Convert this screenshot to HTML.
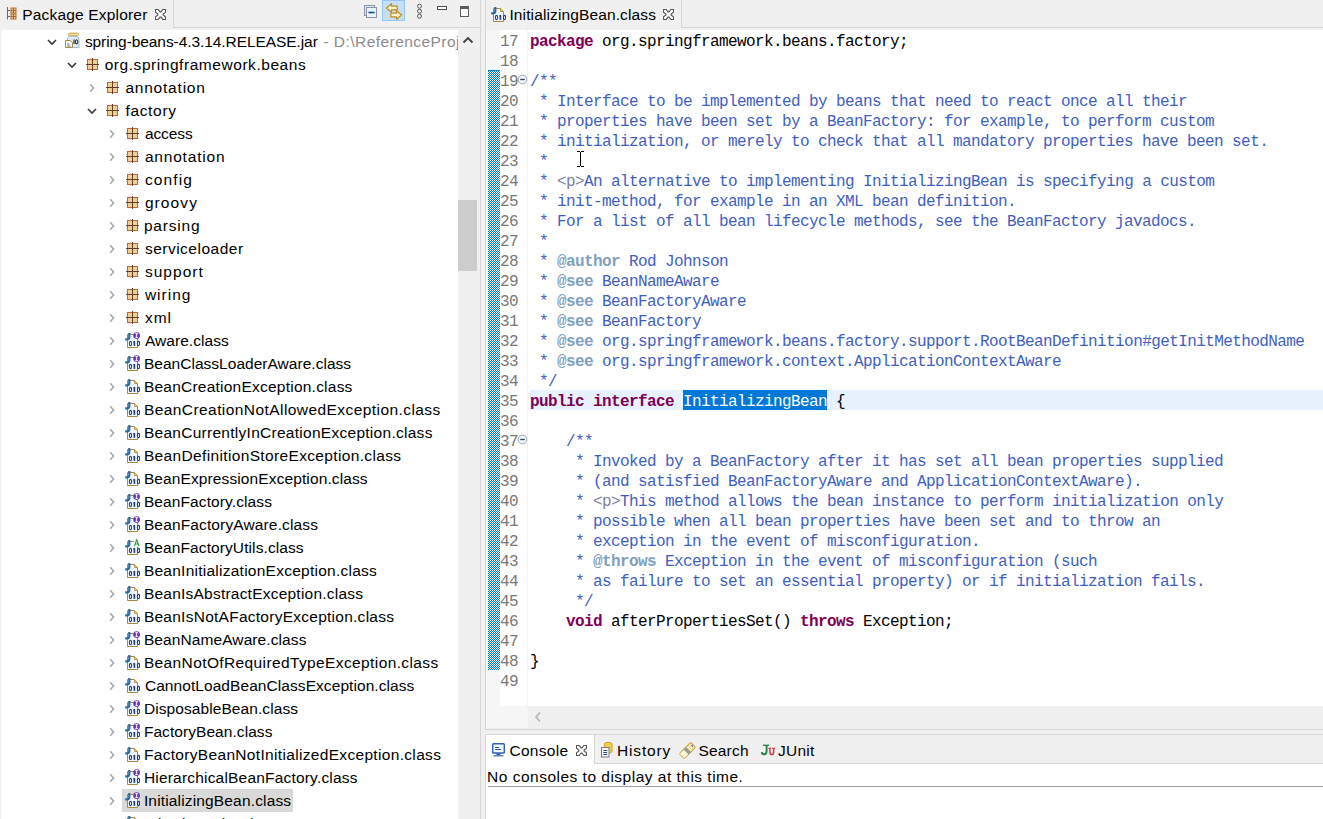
<!DOCTYPE html><html><head><meta charset="utf-8"><title>Eclipse</title><style>
*{margin:0;padding:0;box-sizing:content-box}
html,body{width:1323px;height:819px;overflow:hidden;background:#f0f0f0}
body{position:relative;font-family:"Liberation Sans",sans-serif;font-size:16px;color:#000}
.a{position:absolute;display:block}
.t{position:absolute;white-space:pre;line-height:23px;color:#000;font-size:15.5px}
.ln{position:absolute;left:500px;width:18px;text-align:right;font-family:"Liberation Mono",monospace;font-size:16px;letter-spacing:-0.6px;line-height:20px;color:#787878;white-space:pre}
.cd{position:absolute;left:530px;font-family:"Liberation Mono",monospace;font-size:16px;letter-spacing:-0.6px;line-height:20px;white-space:pre;color:#000}
.kw{color:#7f0055;font-weight:bold}
.jd{color:#3f5fbf}
.jt{color:#7f9fbf;font-weight:bold}
.tg{color:#7f7f9f}
.sel{color:#fff}
.dith{background-color:#fff;background-image:linear-gradient(45deg,#0078d7 25%,transparent 25%,transparent 75%,#0078d7 75%),linear-gradient(45deg,#0078d7 25%,transparent 25%,transparent 75%,#0078d7 75%);background-size:2px 2px;background-position:0 0,1px 1px}
</style></head><body><div class="a" style="left:173px;top:0;width:1px;height:28px;background:#d6d6d6"></div>
<div class="a" style="left:173px;top:27px;width:307px;height:1px;background:#d6d6d6"></div>
<div class="a" style="left:480px;top:0;width:1px;height:819px;background:#d6d6d6"></div>
<svg class="a" style="left:6px;top:6px" width="12" height="15" viewBox="0 0 12 15"><path d="M1.5 1V13.5M1.5 4.5H4.5M1.5 10.5H4.5" stroke="#5f6b80" stroke-width="1"/><rect x="5" y="2" width="5" height="5" fill="#f0c890" stroke="#b8692e" stroke-width="1"/><rect x="5" y="8" width="5" height="5" fill="#f0c890" stroke="#b8692e" stroke-width="1"/><path d="M7.5 2V7M5 4.5H10M7.5 8V13M5 10.5H10" stroke="#a8582a" stroke-width="0.9"/></svg>
<div class="t" style="left:22.20px;top:1px;letter-spacing:0.187px;line-height:28px;">Package Explorer</div>
<svg class="a" style="left:154.5px;top:8.5px" width="11" height="11" viewBox="0 0 11 11"><path d="M0.5 0.5H3.1L5 2.9H6L7.9 0.5H10.5V3.1L8.1 5V6L10.5 7.9V10.5H7.9L6 8.1H5L3.1 10.5H0.5V7.9L2.9 6V5L0.5 3.1Z" fill="#fff" stroke="#555" stroke-width="1.1" stroke-linejoin="miter"/></svg>
<svg class="a" style="left:363px;top:4px" width="15" height="15" viewBox="0 0 15 15"><rect x="1.5" y="1.5" width="10" height="10" fill="#d4ecec" stroke="#8c94ac"/><rect x="3.5" y="3.5" width="10" height="10" fill="#e6f6f6" stroke="#8c94ac"/><path d="M5.5 8.5H11.5" stroke="#0b4a84" stroke-width="1.6"/></svg>
<div class="a" style="left:382px;top:0;width:21px;height:19px;background:#c4dff6;border:1px solid #90c7f4"></div>
<svg class="a" style="left:384px;top:2px" width="20" height="19" viewBox="0 0 20 19"><path d="M2.5 6L7.5 1.8V4.2H13.2V7.8H7.5V10.2Z" fill="#fff6d0" stroke="#c48a18" stroke-width="1.2" stroke-linejoin="round"/><path d="M17.5 13L12.5 8.8V11.2H6.8V14.8H12.5V17.2Z" fill="#fff6d0" stroke="#c48a18" stroke-width="1.2" stroke-linejoin="round"/></svg>
<svg class="a" style="left:414px;top:3px" width="11" height="17" viewBox="0 0 11 17"><g fill="none" stroke="#555" stroke-width="1"><circle cx="5.5" cy="3.2" r="2"/><circle cx="5.5" cy="8.2" r="2"/><circle cx="5.5" cy="13.2" r="2"/></g></svg>
<div class="a" style="left:437px;top:6px;width:8px;height:2px;border:1px solid #505050;background:#fff"></div>
<div class="a" style="left:460px;top:6px;width:7px;height:7px;border:1.5px solid #5a5a5a;background:#fff;border-top-width:3.5px"></div>
<div class="a" style="left:1px;top:30px;width:457px;height:789px;background:#fff"></div>
<div class="a" style="left:458px;top:30px;width:22px;height:789px;background:#f0f0f0"></div>
<div class="a" style="left:458px;top:200px;width:19px;height:71px;background:#cdcdcd"></div>
<svg class="a" style="left:462px;top:36px" width="12" height="8" viewBox="0 0 12 8"><path d="M1.5 6.5L6 2L10.5 6.5" fill="none" stroke="#404040" stroke-width="1.8"/></svg>
<svg class="a" style="left:46.5px;top:37.5px" width="10" height="8" viewBox="0 0 10 8"><path d="M1 2L5 6L9 2" fill="none" stroke="#3c3c3c" stroke-width="1.7"/></svg>
<svg class="a" style="left:64px;top:32px" width="18" height="18" viewBox="0 0 18 18"><rect x="4.5" y="1.2" width="10" height="2.6" rx="1.3" fill="#f3e6a6" stroke="#c9a22e" stroke-width="1"/><path d="M5.5 4.3Q3.2 5.5 3.2 8.5V15.6H15V8.5Q15 5.5 13 4.3Z" fill="#e2eaf5" stroke="#a4b6d0" stroke-width="1"/><path d="M10 7.6V12" stroke="#333" stroke-width="1.2"/><ellipse cx="12.6" cy="9.8" rx="1.2" ry="2.1" fill="none" stroke="#333" stroke-width="1.1"/><path d="M1.5 8.5H6.3L8.5 10.7V15.5H1.5Z" fill="#f6f8fc" stroke="#a88a3c" stroke-width="1"/><path d="M3 12H5.5M3 14H6.5" stroke="#4a6aa8" stroke-width="0.9"/></svg>
<svg class="a" style="left:66.5px;top:60.5px" width="10" height="8" viewBox="0 0 10 8"><path d="M1 2L5 6L9 2" fill="none" stroke="#3c3c3c" stroke-width="1.7"/></svg>
<svg class="a" style="left:84px;top:56px" width="16" height="16" viewBox="0 0 16 16"><rect x="3.5" y="3.5" width="10" height="10" fill="#ecd098" stroke="#b86a3a" stroke-width="1"/><path d="M8.5 2V15M2 8.5H15" stroke="#6a3a28" stroke-width="1"/></svg>
<svg class="a" style="left:88px;top:82.5px" width="8" height="10" viewBox="0 0 8 10"><path d="M2.2 1.2L5.6 5L2.2 8.8" fill="none" stroke="#a6a6a6" stroke-width="1.5"/></svg>
<svg class="a" style="left:104px;top:79px" width="16" height="16" viewBox="0 0 16 16"><rect x="3.5" y="3.5" width="10" height="10" fill="#ecd098" stroke="#b86a3a" stroke-width="1"/><path d="M8.5 2V15M2 8.5H15" stroke="#6a3a28" stroke-width="1"/></svg>
<svg class="a" style="left:86.5px;top:106.5px" width="10" height="8" viewBox="0 0 10 8"><path d="M1 2L5 6L9 2" fill="none" stroke="#3c3c3c" stroke-width="1.7"/></svg>
<svg class="a" style="left:104px;top:102px" width="16" height="16" viewBox="0 0 16 16"><rect x="3.5" y="3.5" width="10" height="10" fill="#ecd098" stroke="#b86a3a" stroke-width="1"/><path d="M8.5 2V15M2 8.5H15" stroke="#6a3a28" stroke-width="1"/></svg>
<svg class="a" style="left:108px;top:128.5px" width="8" height="10" viewBox="0 0 8 10"><path d="M2.2 1.2L5.6 5L2.2 8.8" fill="none" stroke="#a6a6a6" stroke-width="1.5"/></svg>
<svg class="a" style="left:124px;top:125px" width="16" height="16" viewBox="0 0 16 16"><rect x="3.5" y="3.5" width="10" height="10" fill="#ecd098" stroke="#b86a3a" stroke-width="1"/><path d="M8.5 2V15M2 8.5H15" stroke="#6a3a28" stroke-width="1"/></svg>
<svg class="a" style="left:108px;top:151.5px" width="8" height="10" viewBox="0 0 8 10"><path d="M2.2 1.2L5.6 5L2.2 8.8" fill="none" stroke="#a6a6a6" stroke-width="1.5"/></svg>
<svg class="a" style="left:124px;top:148px" width="16" height="16" viewBox="0 0 16 16"><rect x="3.5" y="3.5" width="10" height="10" fill="#ecd098" stroke="#b86a3a" stroke-width="1"/><path d="M8.5 2V15M2 8.5H15" stroke="#6a3a28" stroke-width="1"/></svg>
<svg class="a" style="left:108px;top:174.5px" width="8" height="10" viewBox="0 0 8 10"><path d="M2.2 1.2L5.6 5L2.2 8.8" fill="none" stroke="#a6a6a6" stroke-width="1.5"/></svg>
<svg class="a" style="left:124px;top:171px" width="16" height="16" viewBox="0 0 16 16"><rect x="3.5" y="3.5" width="10" height="10" fill="#ecd098" stroke="#b86a3a" stroke-width="1"/><path d="M8.5 2V15M2 8.5H15" stroke="#6a3a28" stroke-width="1"/></svg>
<svg class="a" style="left:108px;top:197.5px" width="8" height="10" viewBox="0 0 8 10"><path d="M2.2 1.2L5.6 5L2.2 8.8" fill="none" stroke="#a6a6a6" stroke-width="1.5"/></svg>
<svg class="a" style="left:124px;top:194px" width="16" height="16" viewBox="0 0 16 16"><rect x="3.5" y="3.5" width="10" height="10" fill="#ecd098" stroke="#b86a3a" stroke-width="1"/><path d="M8.5 2V15M2 8.5H15" stroke="#6a3a28" stroke-width="1"/></svg>
<svg class="a" style="left:108px;top:220.5px" width="8" height="10" viewBox="0 0 8 10"><path d="M2.2 1.2L5.6 5L2.2 8.8" fill="none" stroke="#a6a6a6" stroke-width="1.5"/></svg>
<svg class="a" style="left:124px;top:217px" width="16" height="16" viewBox="0 0 16 16"><rect x="3.5" y="3.5" width="10" height="10" fill="#ecd098" stroke="#b86a3a" stroke-width="1"/><path d="M8.5 2V15M2 8.5H15" stroke="#6a3a28" stroke-width="1"/></svg>
<svg class="a" style="left:108px;top:243.5px" width="8" height="10" viewBox="0 0 8 10"><path d="M2.2 1.2L5.6 5L2.2 8.8" fill="none" stroke="#a6a6a6" stroke-width="1.5"/></svg>
<svg class="a" style="left:124px;top:240px" width="16" height="16" viewBox="0 0 16 16"><rect x="3.5" y="3.5" width="10" height="10" fill="#ecd098" stroke="#b86a3a" stroke-width="1"/><path d="M8.5 2V15M2 8.5H15" stroke="#6a3a28" stroke-width="1"/></svg>
<svg class="a" style="left:108px;top:266.5px" width="8" height="10" viewBox="0 0 8 10"><path d="M2.2 1.2L5.6 5L2.2 8.8" fill="none" stroke="#a6a6a6" stroke-width="1.5"/></svg>
<svg class="a" style="left:124px;top:263px" width="16" height="16" viewBox="0 0 16 16"><rect x="3.5" y="3.5" width="10" height="10" fill="#ecd098" stroke="#b86a3a" stroke-width="1"/><path d="M8.5 2V15M2 8.5H15" stroke="#6a3a28" stroke-width="1"/></svg>
<svg class="a" style="left:108px;top:289.5px" width="8" height="10" viewBox="0 0 8 10"><path d="M2.2 1.2L5.6 5L2.2 8.8" fill="none" stroke="#a6a6a6" stroke-width="1.5"/></svg>
<svg class="a" style="left:124px;top:286px" width="16" height="16" viewBox="0 0 16 16"><rect x="3.5" y="3.5" width="10" height="10" fill="#ecd098" stroke="#b86a3a" stroke-width="1"/><path d="M8.5 2V15M2 8.5H15" stroke="#6a3a28" stroke-width="1"/></svg>
<svg class="a" style="left:108px;top:312.5px" width="8" height="10" viewBox="0 0 8 10"><path d="M2.2 1.2L5.6 5L2.2 8.8" fill="none" stroke="#a6a6a6" stroke-width="1.5"/></svg>
<svg class="a" style="left:124px;top:309px" width="16" height="16" viewBox="0 0 16 16"><rect x="3.5" y="3.5" width="10" height="10" fill="#ecd098" stroke="#b86a3a" stroke-width="1"/><path d="M8.5 2V15M2 8.5H15" stroke="#6a3a28" stroke-width="1"/></svg>
<svg class="a" style="left:108px;top:335.5px" width="8" height="10" viewBox="0 0 8 10"><path d="M2.2 1.2L5.6 5L2.2 8.8" fill="none" stroke="#a6a6a6" stroke-width="1.5"/></svg>
<svg class="a" style="left:124px;top:332px" width="16" height="16" viewBox="0 0 16 16"><path d="M3.5 2.5H13.5V15.5H3.5Z" fill="#f4f7fc" stroke="#a88a3c" stroke-width="1"/><circle cx="12.6" cy="3.6" r="3.4" fill="#6e3fb0"/><path d="M11.3 1.6H13.9M11.3 5.6H13.9M12.6 1.6V5.6" stroke="#fff" stroke-width="0.9"/><path d="M5.3 1V5.3Q5.3 7.3 3 7.3H1.2" fill="none" stroke="#2c6aa6" stroke-width="2.2"/><g fill="none" stroke="#1b3f78" stroke-width="1.1"><ellipse cx="6.5" cy="11.5" rx="1.15" ry="2.1"/><ellipse cx="14.5" cy="11.5" rx="1.15" ry="2.1"/></g><path d="M10.4 9.2V13.9" stroke="#1b3f78" stroke-width="1.6"/><path d="M9.4 10.2L10.6 9.3" stroke="#1b3f78" stroke-width="1.1"/></svg>
<svg class="a" style="left:108px;top:358.5px" width="8" height="10" viewBox="0 0 8 10"><path d="M2.2 1.2L5.6 5L2.2 8.8" fill="none" stroke="#a6a6a6" stroke-width="1.5"/></svg>
<svg class="a" style="left:124px;top:355px" width="16" height="16" viewBox="0 0 16 16"><path d="M3.5 2.5H13.5V15.5H3.5Z" fill="#f4f7fc" stroke="#a88a3c" stroke-width="1"/><circle cx="12.6" cy="3.6" r="3.4" fill="#6e3fb0"/><path d="M11.3 1.6H13.9M11.3 5.6H13.9M12.6 1.6V5.6" stroke="#fff" stroke-width="0.9"/><path d="M5.3 1V5.3Q5.3 7.3 3 7.3H1.2" fill="none" stroke="#2c6aa6" stroke-width="2.2"/><g fill="none" stroke="#1b3f78" stroke-width="1.1"><ellipse cx="6.5" cy="11.5" rx="1.15" ry="2.1"/><ellipse cx="14.5" cy="11.5" rx="1.15" ry="2.1"/></g><path d="M10.4 9.2V13.9" stroke="#1b3f78" stroke-width="1.6"/><path d="M9.4 10.2L10.6 9.3" stroke="#1b3f78" stroke-width="1.1"/></svg>
<svg class="a" style="left:108px;top:381.5px" width="8" height="10" viewBox="0 0 8 10"><path d="M2.2 1.2L5.6 5L2.2 8.8" fill="none" stroke="#a6a6a6" stroke-width="1.5"/></svg>
<svg class="a" style="left:124px;top:378px" width="16" height="16" viewBox="0 0 16 16"><path d="M3.5 2.5H10.5L13.5 5.5V15.5H3.5Z" fill="#f4f7fc" stroke="#a88a3c" stroke-width="1"/><path d="M10.5 2.5V5.5H13.5" fill="#e8cf8a" stroke="#b8943c" stroke-width="1"/><path d="M5.3 1V5.3Q5.3 7.3 3 7.3H1.2" fill="none" stroke="#2c6aa6" stroke-width="2.2"/><g fill="none" stroke="#1b3f78" stroke-width="1.1"><ellipse cx="6.5" cy="11.5" rx="1.15" ry="2.1"/><ellipse cx="14.5" cy="11.5" rx="1.15" ry="2.1"/></g><path d="M10.4 9.2V13.9" stroke="#1b3f78" stroke-width="1.6"/><path d="M9.4 10.2L10.6 9.3" stroke="#1b3f78" stroke-width="1.1"/></svg>
<svg class="a" style="left:108px;top:404.5px" width="8" height="10" viewBox="0 0 8 10"><path d="M2.2 1.2L5.6 5L2.2 8.8" fill="none" stroke="#a6a6a6" stroke-width="1.5"/></svg>
<svg class="a" style="left:124px;top:401px" width="16" height="16" viewBox="0 0 16 16"><path d="M3.5 2.5H10.5L13.5 5.5V15.5H3.5Z" fill="#f4f7fc" stroke="#a88a3c" stroke-width="1"/><path d="M10.5 2.5V5.5H13.5" fill="#e8cf8a" stroke="#b8943c" stroke-width="1"/><path d="M5.3 1V5.3Q5.3 7.3 3 7.3H1.2" fill="none" stroke="#2c6aa6" stroke-width="2.2"/><g fill="none" stroke="#1b3f78" stroke-width="1.1"><ellipse cx="6.5" cy="11.5" rx="1.15" ry="2.1"/><ellipse cx="14.5" cy="11.5" rx="1.15" ry="2.1"/></g><path d="M10.4 9.2V13.9" stroke="#1b3f78" stroke-width="1.6"/><path d="M9.4 10.2L10.6 9.3" stroke="#1b3f78" stroke-width="1.1"/></svg>
<svg class="a" style="left:108px;top:427.5px" width="8" height="10" viewBox="0 0 8 10"><path d="M2.2 1.2L5.6 5L2.2 8.8" fill="none" stroke="#a6a6a6" stroke-width="1.5"/></svg>
<svg class="a" style="left:124px;top:424px" width="16" height="16" viewBox="0 0 16 16"><path d="M3.5 2.5H10.5L13.5 5.5V15.5H3.5Z" fill="#f4f7fc" stroke="#a88a3c" stroke-width="1"/><path d="M10.5 2.5V5.5H13.5" fill="#e8cf8a" stroke="#b8943c" stroke-width="1"/><path d="M5.3 1V5.3Q5.3 7.3 3 7.3H1.2" fill="none" stroke="#2c6aa6" stroke-width="2.2"/><g fill="none" stroke="#1b3f78" stroke-width="1.1"><ellipse cx="6.5" cy="11.5" rx="1.15" ry="2.1"/><ellipse cx="14.5" cy="11.5" rx="1.15" ry="2.1"/></g><path d="M10.4 9.2V13.9" stroke="#1b3f78" stroke-width="1.6"/><path d="M9.4 10.2L10.6 9.3" stroke="#1b3f78" stroke-width="1.1"/></svg>
<svg class="a" style="left:108px;top:450.5px" width="8" height="10" viewBox="0 0 8 10"><path d="M2.2 1.2L5.6 5L2.2 8.8" fill="none" stroke="#a6a6a6" stroke-width="1.5"/></svg>
<svg class="a" style="left:124px;top:447px" width="16" height="16" viewBox="0 0 16 16"><path d="M3.5 2.5H10.5L13.5 5.5V15.5H3.5Z" fill="#f4f7fc" stroke="#a88a3c" stroke-width="1"/><path d="M10.5 2.5V5.5H13.5" fill="#e8cf8a" stroke="#b8943c" stroke-width="1"/><path d="M5.3 1V5.3Q5.3 7.3 3 7.3H1.2" fill="none" stroke="#2c6aa6" stroke-width="2.2"/><g fill="none" stroke="#1b3f78" stroke-width="1.1"><ellipse cx="6.5" cy="11.5" rx="1.15" ry="2.1"/><ellipse cx="14.5" cy="11.5" rx="1.15" ry="2.1"/></g><path d="M10.4 9.2V13.9" stroke="#1b3f78" stroke-width="1.6"/><path d="M9.4 10.2L10.6 9.3" stroke="#1b3f78" stroke-width="1.1"/></svg>
<svg class="a" style="left:108px;top:473.5px" width="8" height="10" viewBox="0 0 8 10"><path d="M2.2 1.2L5.6 5L2.2 8.8" fill="none" stroke="#a6a6a6" stroke-width="1.5"/></svg>
<svg class="a" style="left:124px;top:470px" width="16" height="16" viewBox="0 0 16 16"><path d="M3.5 2.5H10.5L13.5 5.5V15.5H3.5Z" fill="#f4f7fc" stroke="#a88a3c" stroke-width="1"/><path d="M10.5 2.5V5.5H13.5" fill="#e8cf8a" stroke="#b8943c" stroke-width="1"/><path d="M5.3 1V5.3Q5.3 7.3 3 7.3H1.2" fill="none" stroke="#2c6aa6" stroke-width="2.2"/><g fill="none" stroke="#1b3f78" stroke-width="1.1"><ellipse cx="6.5" cy="11.5" rx="1.15" ry="2.1"/><ellipse cx="14.5" cy="11.5" rx="1.15" ry="2.1"/></g><path d="M10.4 9.2V13.9" stroke="#1b3f78" stroke-width="1.6"/><path d="M9.4 10.2L10.6 9.3" stroke="#1b3f78" stroke-width="1.1"/></svg>
<svg class="a" style="left:108px;top:496.5px" width="8" height="10" viewBox="0 0 8 10"><path d="M2.2 1.2L5.6 5L2.2 8.8" fill="none" stroke="#a6a6a6" stroke-width="1.5"/></svg>
<svg class="a" style="left:124px;top:493px" width="16" height="16" viewBox="0 0 16 16"><path d="M3.5 2.5H13.5V15.5H3.5Z" fill="#f4f7fc" stroke="#a88a3c" stroke-width="1"/><circle cx="12.6" cy="3.6" r="3.4" fill="#6e3fb0"/><path d="M11.3 1.6H13.9M11.3 5.6H13.9M12.6 1.6V5.6" stroke="#fff" stroke-width="0.9"/><path d="M5.3 1V5.3Q5.3 7.3 3 7.3H1.2" fill="none" stroke="#2c6aa6" stroke-width="2.2"/><g fill="none" stroke="#1b3f78" stroke-width="1.1"><ellipse cx="6.5" cy="11.5" rx="1.15" ry="2.1"/><ellipse cx="14.5" cy="11.5" rx="1.15" ry="2.1"/></g><path d="M10.4 9.2V13.9" stroke="#1b3f78" stroke-width="1.6"/><path d="M9.4 10.2L10.6 9.3" stroke="#1b3f78" stroke-width="1.1"/></svg>
<svg class="a" style="left:108px;top:519.5px" width="8" height="10" viewBox="0 0 8 10"><path d="M2.2 1.2L5.6 5L2.2 8.8" fill="none" stroke="#a6a6a6" stroke-width="1.5"/></svg>
<svg class="a" style="left:124px;top:516px" width="16" height="16" viewBox="0 0 16 16"><path d="M3.5 2.5H13.5V15.5H3.5Z" fill="#f4f7fc" stroke="#a88a3c" stroke-width="1"/><circle cx="12.6" cy="3.6" r="3.4" fill="#6e3fb0"/><path d="M11.3 1.6H13.9M11.3 5.6H13.9M12.6 1.6V5.6" stroke="#fff" stroke-width="0.9"/><path d="M5.3 1V5.3Q5.3 7.3 3 7.3H1.2" fill="none" stroke="#2c6aa6" stroke-width="2.2"/><g fill="none" stroke="#1b3f78" stroke-width="1.1"><ellipse cx="6.5" cy="11.5" rx="1.15" ry="2.1"/><ellipse cx="14.5" cy="11.5" rx="1.15" ry="2.1"/></g><path d="M10.4 9.2V13.9" stroke="#1b3f78" stroke-width="1.6"/><path d="M9.4 10.2L10.6 9.3" stroke="#1b3f78" stroke-width="1.1"/></svg>
<svg class="a" style="left:108px;top:542.5px" width="8" height="10" viewBox="0 0 8 10"><path d="M2.2 1.2L5.6 5L2.2 8.8" fill="none" stroke="#a6a6a6" stroke-width="1.5"/></svg>
<svg class="a" style="left:124px;top:539px" width="16" height="16" viewBox="0 0 16 16"><path d="M3.5 2.5H13.5V15.5H3.5Z" fill="#f4f7fc" stroke="#a88a3c" stroke-width="1"/><rect x="10" y="0" width="6" height="7.5" fill="#fff"/><path d="M10.5 7L12.7 0.6L14.9 7M11.3 5H14.1" fill="none" stroke="#2a9a48" stroke-width="1.1"/><path d="M5.3 1V5.3Q5.3 7.3 3 7.3H1.2" fill="none" stroke="#2c6aa6" stroke-width="2.2"/><g fill="none" stroke="#1b3f78" stroke-width="1.1"><ellipse cx="6.5" cy="11.5" rx="1.15" ry="2.1"/><ellipse cx="14.5" cy="11.5" rx="1.15" ry="2.1"/></g><path d="M10.4 9.2V13.9" stroke="#1b3f78" stroke-width="1.6"/><path d="M9.4 10.2L10.6 9.3" stroke="#1b3f78" stroke-width="1.1"/></svg>
<svg class="a" style="left:108px;top:565.5px" width="8" height="10" viewBox="0 0 8 10"><path d="M2.2 1.2L5.6 5L2.2 8.8" fill="none" stroke="#a6a6a6" stroke-width="1.5"/></svg>
<svg class="a" style="left:124px;top:562px" width="16" height="16" viewBox="0 0 16 16"><path d="M3.5 2.5H10.5L13.5 5.5V15.5H3.5Z" fill="#f4f7fc" stroke="#a88a3c" stroke-width="1"/><path d="M10.5 2.5V5.5H13.5" fill="#e8cf8a" stroke="#b8943c" stroke-width="1"/><path d="M5.3 1V5.3Q5.3 7.3 3 7.3H1.2" fill="none" stroke="#2c6aa6" stroke-width="2.2"/><g fill="none" stroke="#1b3f78" stroke-width="1.1"><ellipse cx="6.5" cy="11.5" rx="1.15" ry="2.1"/><ellipse cx="14.5" cy="11.5" rx="1.15" ry="2.1"/></g><path d="M10.4 9.2V13.9" stroke="#1b3f78" stroke-width="1.6"/><path d="M9.4 10.2L10.6 9.3" stroke="#1b3f78" stroke-width="1.1"/></svg>
<svg class="a" style="left:108px;top:588.5px" width="8" height="10" viewBox="0 0 8 10"><path d="M2.2 1.2L5.6 5L2.2 8.8" fill="none" stroke="#a6a6a6" stroke-width="1.5"/></svg>
<svg class="a" style="left:124px;top:585px" width="16" height="16" viewBox="0 0 16 16"><path d="M3.5 2.5H10.5L13.5 5.5V15.5H3.5Z" fill="#f4f7fc" stroke="#a88a3c" stroke-width="1"/><path d="M10.5 2.5V5.5H13.5" fill="#e8cf8a" stroke="#b8943c" stroke-width="1"/><path d="M5.3 1V5.3Q5.3 7.3 3 7.3H1.2" fill="none" stroke="#2c6aa6" stroke-width="2.2"/><g fill="none" stroke="#1b3f78" stroke-width="1.1"><ellipse cx="6.5" cy="11.5" rx="1.15" ry="2.1"/><ellipse cx="14.5" cy="11.5" rx="1.15" ry="2.1"/></g><path d="M10.4 9.2V13.9" stroke="#1b3f78" stroke-width="1.6"/><path d="M9.4 10.2L10.6 9.3" stroke="#1b3f78" stroke-width="1.1"/></svg>
<svg class="a" style="left:108px;top:611.5px" width="8" height="10" viewBox="0 0 8 10"><path d="M2.2 1.2L5.6 5L2.2 8.8" fill="none" stroke="#a6a6a6" stroke-width="1.5"/></svg>
<svg class="a" style="left:124px;top:608px" width="16" height="16" viewBox="0 0 16 16"><path d="M3.5 2.5H10.5L13.5 5.5V15.5H3.5Z" fill="#f4f7fc" stroke="#a88a3c" stroke-width="1"/><path d="M10.5 2.5V5.5H13.5" fill="#e8cf8a" stroke="#b8943c" stroke-width="1"/><path d="M5.3 1V5.3Q5.3 7.3 3 7.3H1.2" fill="none" stroke="#2c6aa6" stroke-width="2.2"/><g fill="none" stroke="#1b3f78" stroke-width="1.1"><ellipse cx="6.5" cy="11.5" rx="1.15" ry="2.1"/><ellipse cx="14.5" cy="11.5" rx="1.15" ry="2.1"/></g><path d="M10.4 9.2V13.9" stroke="#1b3f78" stroke-width="1.6"/><path d="M9.4 10.2L10.6 9.3" stroke="#1b3f78" stroke-width="1.1"/></svg>
<svg class="a" style="left:108px;top:634.5px" width="8" height="10" viewBox="0 0 8 10"><path d="M2.2 1.2L5.6 5L2.2 8.8" fill="none" stroke="#a6a6a6" stroke-width="1.5"/></svg>
<svg class="a" style="left:124px;top:631px" width="16" height="16" viewBox="0 0 16 16"><path d="M3.5 2.5H13.5V15.5H3.5Z" fill="#f4f7fc" stroke="#a88a3c" stroke-width="1"/><circle cx="12.6" cy="3.6" r="3.4" fill="#6e3fb0"/><path d="M11.3 1.6H13.9M11.3 5.6H13.9M12.6 1.6V5.6" stroke="#fff" stroke-width="0.9"/><path d="M5.3 1V5.3Q5.3 7.3 3 7.3H1.2" fill="none" stroke="#2c6aa6" stroke-width="2.2"/><g fill="none" stroke="#1b3f78" stroke-width="1.1"><ellipse cx="6.5" cy="11.5" rx="1.15" ry="2.1"/><ellipse cx="14.5" cy="11.5" rx="1.15" ry="2.1"/></g><path d="M10.4 9.2V13.9" stroke="#1b3f78" stroke-width="1.6"/><path d="M9.4 10.2L10.6 9.3" stroke="#1b3f78" stroke-width="1.1"/></svg>
<svg class="a" style="left:108px;top:657.5px" width="8" height="10" viewBox="0 0 8 10"><path d="M2.2 1.2L5.6 5L2.2 8.8" fill="none" stroke="#a6a6a6" stroke-width="1.5"/></svg>
<svg class="a" style="left:124px;top:654px" width="16" height="16" viewBox="0 0 16 16"><path d="M3.5 2.5H10.5L13.5 5.5V15.5H3.5Z" fill="#f4f7fc" stroke="#a88a3c" stroke-width="1"/><path d="M10.5 2.5V5.5H13.5" fill="#e8cf8a" stroke="#b8943c" stroke-width="1"/><path d="M5.3 1V5.3Q5.3 7.3 3 7.3H1.2" fill="none" stroke="#2c6aa6" stroke-width="2.2"/><g fill="none" stroke="#1b3f78" stroke-width="1.1"><ellipse cx="6.5" cy="11.5" rx="1.15" ry="2.1"/><ellipse cx="14.5" cy="11.5" rx="1.15" ry="2.1"/></g><path d="M10.4 9.2V13.9" stroke="#1b3f78" stroke-width="1.6"/><path d="M9.4 10.2L10.6 9.3" stroke="#1b3f78" stroke-width="1.1"/></svg>
<svg class="a" style="left:108px;top:680.5px" width="8" height="10" viewBox="0 0 8 10"><path d="M2.2 1.2L5.6 5L2.2 8.8" fill="none" stroke="#a6a6a6" stroke-width="1.5"/></svg>
<svg class="a" style="left:124px;top:677px" width="16" height="16" viewBox="0 0 16 16"><path d="M3.5 2.5H10.5L13.5 5.5V15.5H3.5Z" fill="#f4f7fc" stroke="#a88a3c" stroke-width="1"/><path d="M10.5 2.5V5.5H13.5" fill="#e8cf8a" stroke="#b8943c" stroke-width="1"/><path d="M5.3 1V5.3Q5.3 7.3 3 7.3H1.2" fill="none" stroke="#2c6aa6" stroke-width="2.2"/><g fill="none" stroke="#1b3f78" stroke-width="1.1"><ellipse cx="6.5" cy="11.5" rx="1.15" ry="2.1"/><ellipse cx="14.5" cy="11.5" rx="1.15" ry="2.1"/></g><path d="M10.4 9.2V13.9" stroke="#1b3f78" stroke-width="1.6"/><path d="M9.4 10.2L10.6 9.3" stroke="#1b3f78" stroke-width="1.1"/></svg>
<svg class="a" style="left:108px;top:703.5px" width="8" height="10" viewBox="0 0 8 10"><path d="M2.2 1.2L5.6 5L2.2 8.8" fill="none" stroke="#a6a6a6" stroke-width="1.5"/></svg>
<svg class="a" style="left:124px;top:700px" width="16" height="16" viewBox="0 0 16 16"><path d="M3.5 2.5H13.5V15.5H3.5Z" fill="#f4f7fc" stroke="#a88a3c" stroke-width="1"/><circle cx="12.6" cy="3.6" r="3.4" fill="#6e3fb0"/><path d="M11.3 1.6H13.9M11.3 5.6H13.9M12.6 1.6V5.6" stroke="#fff" stroke-width="0.9"/><path d="M5.3 1V5.3Q5.3 7.3 3 7.3H1.2" fill="none" stroke="#2c6aa6" stroke-width="2.2"/><g fill="none" stroke="#1b3f78" stroke-width="1.1"><ellipse cx="6.5" cy="11.5" rx="1.15" ry="2.1"/><ellipse cx="14.5" cy="11.5" rx="1.15" ry="2.1"/></g><path d="M10.4 9.2V13.9" stroke="#1b3f78" stroke-width="1.6"/><path d="M9.4 10.2L10.6 9.3" stroke="#1b3f78" stroke-width="1.1"/></svg>
<svg class="a" style="left:108px;top:726.5px" width="8" height="10" viewBox="0 0 8 10"><path d="M2.2 1.2L5.6 5L2.2 8.8" fill="none" stroke="#a6a6a6" stroke-width="1.5"/></svg>
<svg class="a" style="left:124px;top:723px" width="16" height="16" viewBox="0 0 16 16"><path d="M3.5 2.5H13.5V15.5H3.5Z" fill="#f4f7fc" stroke="#a88a3c" stroke-width="1"/><circle cx="12.6" cy="3.6" r="3.4" fill="#6e3fb0"/><path d="M11.3 1.6H13.9M11.3 5.6H13.9M12.6 1.6V5.6" stroke="#fff" stroke-width="0.9"/><path d="M5.3 1V5.3Q5.3 7.3 3 7.3H1.2" fill="none" stroke="#2c6aa6" stroke-width="2.2"/><g fill="none" stroke="#1b3f78" stroke-width="1.1"><ellipse cx="6.5" cy="11.5" rx="1.15" ry="2.1"/><ellipse cx="14.5" cy="11.5" rx="1.15" ry="2.1"/></g><path d="M10.4 9.2V13.9" stroke="#1b3f78" stroke-width="1.6"/><path d="M9.4 10.2L10.6 9.3" stroke="#1b3f78" stroke-width="1.1"/></svg>
<svg class="a" style="left:108px;top:749.5px" width="8" height="10" viewBox="0 0 8 10"><path d="M2.2 1.2L5.6 5L2.2 8.8" fill="none" stroke="#a6a6a6" stroke-width="1.5"/></svg>
<svg class="a" style="left:124px;top:746px" width="16" height="16" viewBox="0 0 16 16"><path d="M3.5 2.5H10.5L13.5 5.5V15.5H3.5Z" fill="#f4f7fc" stroke="#a88a3c" stroke-width="1"/><path d="M10.5 2.5V5.5H13.5" fill="#e8cf8a" stroke="#b8943c" stroke-width="1"/><path d="M5.3 1V5.3Q5.3 7.3 3 7.3H1.2" fill="none" stroke="#2c6aa6" stroke-width="2.2"/><g fill="none" stroke="#1b3f78" stroke-width="1.1"><ellipse cx="6.5" cy="11.5" rx="1.15" ry="2.1"/><ellipse cx="14.5" cy="11.5" rx="1.15" ry="2.1"/></g><path d="M10.4 9.2V13.9" stroke="#1b3f78" stroke-width="1.6"/><path d="M9.4 10.2L10.6 9.3" stroke="#1b3f78" stroke-width="1.1"/></svg>
<svg class="a" style="left:108px;top:772.5px" width="8" height="10" viewBox="0 0 8 10"><path d="M2.2 1.2L5.6 5L2.2 8.8" fill="none" stroke="#a6a6a6" stroke-width="1.5"/></svg>
<svg class="a" style="left:124px;top:769px" width="16" height="16" viewBox="0 0 16 16"><path d="M3.5 2.5H13.5V15.5H3.5Z" fill="#f4f7fc" stroke="#a88a3c" stroke-width="1"/><circle cx="12.6" cy="3.6" r="3.4" fill="#6e3fb0"/><path d="M11.3 1.6H13.9M11.3 5.6H13.9M12.6 1.6V5.6" stroke="#fff" stroke-width="0.9"/><path d="M5.3 1V5.3Q5.3 7.3 3 7.3H1.2" fill="none" stroke="#2c6aa6" stroke-width="2.2"/><g fill="none" stroke="#1b3f78" stroke-width="1.1"><ellipse cx="6.5" cy="11.5" rx="1.15" ry="2.1"/><ellipse cx="14.5" cy="11.5" rx="1.15" ry="2.1"/></g><path d="M10.4 9.2V13.9" stroke="#1b3f78" stroke-width="1.6"/><path d="M9.4 10.2L10.6 9.3" stroke="#1b3f78" stroke-width="1.1"/></svg>
<div class="a" style="left:122px;top:789px;width:171px;height:23px;background:#d9d9d9"></div>
<svg class="a" style="left:108px;top:795.5px" width="8" height="10" viewBox="0 0 8 10"><path d="M2.2 1.2L5.6 5L2.2 8.8" fill="none" stroke="#a6a6a6" stroke-width="1.5"/></svg>
<svg class="a" style="left:124px;top:792px" width="16" height="16" viewBox="0 0 16 16"><path d="M3.5 2.5H13.5V15.5H3.5Z" fill="#f4f7fc" stroke="#a88a3c" stroke-width="1"/><circle cx="12.6" cy="3.6" r="3.4" fill="#6e3fb0"/><path d="M11.3 1.6H13.9M11.3 5.6H13.9M12.6 1.6V5.6" stroke="#fff" stroke-width="0.9"/><path d="M5.3 1V5.3Q5.3 7.3 3 7.3H1.2" fill="none" stroke="#2c6aa6" stroke-width="2.2"/><g fill="none" stroke="#1b3f78" stroke-width="1.1"><ellipse cx="6.5" cy="11.5" rx="1.15" ry="2.1"/><ellipse cx="14.5" cy="11.5" rx="1.15" ry="2.1"/></g><path d="M10.4 9.2V13.9" stroke="#1b3f78" stroke-width="1.6"/><path d="M9.4 10.2L10.6 9.3" stroke="#1b3f78" stroke-width="1.1"/></svg>
<svg class="a" style="left:108px;top:818.5px" width="8" height="10" viewBox="0 0 8 10"><path d="M2.2 1.2L5.6 5L2.2 8.8" fill="none" stroke="#a6a6a6" stroke-width="1.5"/></svg>
<svg class="a" style="left:124px;top:815px" width="16" height="16" viewBox="0 0 16 16"><path d="M3.5 2.5H10.5L13.5 5.5V15.5H3.5Z" fill="#f4f7fc" stroke="#a88a3c" stroke-width="1"/><path d="M10.5 2.5V5.5H13.5" fill="#e8cf8a" stroke="#b8943c" stroke-width="1"/><path d="M5.3 1V5.3Q5.3 7.3 3 7.3H1.2" fill="none" stroke="#2c6aa6" stroke-width="2.2"/><g fill="none" stroke="#1b3f78" stroke-width="1.1"><ellipse cx="6.5" cy="11.5" rx="1.15" ry="2.1"/><ellipse cx="14.5" cy="11.5" rx="1.15" ry="2.1"/></g><path d="M10.4 9.2V13.9" stroke="#1b3f78" stroke-width="1.6"/><path d="M9.4 10.2L10.6 9.3" stroke="#1b3f78" stroke-width="1.1"/></svg>
<div class="a" style="left:1px;top:30px;width:457px;height:789px;overflow:hidden">
<div class="t" style="left:83.90px;top:0px;letter-spacing:-0.077px;">spring-beans-4.3.14.RELEASE.jar<span style="color:#8b8b8b;letter-spacing:0.45px;margin-left:1px"> - D:\ReferenceProj</span></div>
<div class="t" style="left:103.70px;top:23px;letter-spacing:0.550px;">org.springframework.beans</div>
<div class="t" style="left:124.40px;top:46px;letter-spacing:0.789px;">annotation</div>
<div class="t" style="left:124.40px;top:69px;letter-spacing:0.683px;">factory</div>
<div class="t" style="left:143.90px;top:92px;letter-spacing:-0.100px;">access</div>
<div class="t" style="left:143.90px;top:115px;letter-spacing:0.811px;">annotation</div>
<div class="t" style="left:143.90px;top:138px;letter-spacing:1.120px;">config</div>
<div class="t" style="left:143.90px;top:161px;letter-spacing:1.100px;">groovy</div>
<div class="t" style="left:142.90px;top:184px;letter-spacing:0.817px;">parsing</div>
<div class="t" style="left:143.90px;top:207px;letter-spacing:0.500px;">serviceloader</div>
<div class="t" style="left:143.90px;top:230px;letter-spacing:1.033px;">support</div>
<div class="t" style="left:143.90px;top:253px;letter-spacing:1.000px;">wiring</div>
<div class="t" style="left:143.90px;top:276px;letter-spacing:1.000px;">xml</div>
<div class="t" style="left:143.90px;top:299px;letter-spacing:0.060px;">Aware.class</div>
<div class="t" style="left:142.90px;top:322px;letter-spacing:0.028px;">BeanClassLoaderAware.class</div>
<div class="t" style="left:142.90px;top:345px;letter-spacing:0.231px;">BeanCreationException.class</div>
<div class="t" style="left:142.90px;top:368px;letter-spacing:0.431px;">BeanCreationNotAllowedException.class</div>
<div class="t" style="left:142.90px;top:391px;letter-spacing:0.276px;">BeanCurrentlyInCreationException.class</div>
<div class="t" style="left:142.90px;top:414px;letter-spacing:0.352px;">BeanDefinitionStoreException.class</div>
<div class="t" style="left:142.90px;top:437px;letter-spacing:0.111px;">BeanExpressionException.class</div>
<div class="t" style="left:142.90px;top:460px;letter-spacing:0.106px;">BeanFactory.class</div>
<div class="t" style="left:142.90px;top:483px;letter-spacing:0.138px;">BeanFactoryAware.class</div>
<div class="t" style="left:142.90px;top:506px;letter-spacing:0.100px;">BeanFactoryUtils.class</div>
<div class="t" style="left:142.90px;top:529px;letter-spacing:0.250px;">BeanInitializationException.class</div>
<div class="t" style="left:142.90px;top:552px;letter-spacing:0.225px;">BeanIsAbstractException.class</div>
<div class="t" style="left:142.90px;top:575px;letter-spacing:0.258px;">BeanIsNotAFactoryException.class</div>
<div class="t" style="left:142.90px;top:598px;letter-spacing:0.094px;">BeanNameAware.class</div>
<div class="t" style="left:142.90px;top:621px;letter-spacing:0.383px;">BeanNotOfRequiredTypeException.class</div>
<div class="t" style="left:143.90px;top:644px;letter-spacing:0.070px;">CannotLoadBeanClassException.class</div>
<div class="t" style="left:142.90px;top:667px;letter-spacing:0.084px;">DisposableBean.class</div>
<div class="t" style="left:142.90px;top:690px;letter-spacing:0.062px;">FactoryBean.class</div>
<div class="t" style="left:142.90px;top:713px;letter-spacing:0.326px;">FactoryBeanNotInitializedException.class</div>
<div class="t" style="left:142.90px;top:736px;letter-spacing:0.193px;">HierarchicalBeanFactory.class</div>
<div class="t" style="left:142.90px;top:759px;letter-spacing:0.157px;">InitializingBean.class</div>
<div class="t" style="left:144.00px;top:782px;letter-spacing:0.000px;">InjectionPoint.class</div>
</div>
<div class="a" style="left:485px;top:0;width:1px;height:730px;background:#d6d6d6"></div>
<div class="a" style="left:681px;top:0;width:1px;height:28px;background:#d6d6d6"></div>
<div class="a" style="left:681px;top:27px;width:642px;height:1px;background:#d6d6d6"></div>
<svg class="a" style="left:490px;top:6px" width="16" height="16" viewBox="0 0 16 16"><path d="M3.5 2.5H10.5L13.5 5.5V15.5H3.5Z" fill="#f4f7fc" stroke="#a88a3c" stroke-width="1"/><path d="M10.5 2.5V5.5H13.5" fill="#e8cf8a" stroke="#b8943c" stroke-width="1"/><path d="M5.3 1V5.3Q5.3 7.3 3 7.3H1.2" fill="none" stroke="#2c6aa6" stroke-width="2.2"/><g fill="none" stroke="#1b3f78" stroke-width="1.1"><ellipse cx="6.5" cy="11.5" rx="1.15" ry="2.1"/><ellipse cx="14.5" cy="11.5" rx="1.15" ry="2.1"/></g><path d="M10.4 9.2V13.9" stroke="#1b3f78" stroke-width="1.6"/><path d="M9.4 10.2L10.6 9.3" stroke="#1b3f78" stroke-width="1.1"/></svg>
<div class="t" style="left:509.40px;top:1px;letter-spacing:0.124px;line-height:28px;">InitializingBean.class</div>
<svg class="a" style="left:662.5px;top:8.5px" width="11" height="11" viewBox="0 0 11 11"><path d="M0.5 0.5H3.1L5 2.9H6L7.9 0.5H10.5V3.1L8.1 5V6L10.5 7.9V10.5H7.9L6 8.1H5L3.1 10.5H0.5V7.9L2.9 6V5L0.5 3.1Z" fill="#fff" stroke="#555" stroke-width="1.1" stroke-linejoin="miter"/></svg>
<div class="a" style="left:486px;top:30px;width:837px;height:698px;background:#f6f6f6"></div>
<div class="a" style="left:500px;top:30px;width:823px;height:676px;background:#fff"></div>
<div class="a" style="left:527px;top:30px;width:1px;height:676px;background:#f4f4f4"></div>
<div class="a" style="left:528px;top:706px;width:795px;height:22px;background:#f0f0f0"></div>
<svg class="a" style="left:533px;top:711px" width="10" height="12" viewBox="0 0 10 12"><path d="M7 1.5L3 6L7 10.5" fill="none" stroke="#b4b4b4" stroke-width="1.6"/></svg>
<div class="a" style="left:485px;top:729px;width:838px;height:1px;background:#d6d6d6"></div>
<div class="a dith" style="left:488px;top:70px;width:12px;height:600px"></div>
<div class="a" style="left:488px;top:70px;width:12px;height:1px;background:#0078d7"></div>
<div class="a" style="left:530px;top:390px;width:793px;height:20px;background:#e8f2fe"></div>
<div class="a" style="left:683px;top:390px;width:144px;height:20px;background:#0078d7"></div>
<div class="ln" style="top:32px">17</div>
<div class="cd" style="top:32px"><span class="kw">package</span><span class="df"> org.springframework.beans.factory;</span></div>
<div class="ln" style="top:52px">18</div>
<div class="ln" style="top:72px">19</div>
<div class="cd" style="top:72px"><span class="jd">/**</span></div>
<div class="ln" style="top:92px">20</div>
<div class="cd" style="top:92px"><span class="jd"> * Interface to be implemented by beans that need to react once all their</span></div>
<div class="ln" style="top:112px">21</div>
<div class="cd" style="top:112px"><span class="jd"> * properties have been set by a BeanFactory: for example, to perform custom</span></div>
<div class="ln" style="top:132px">22</div>
<div class="cd" style="top:132px"><span class="jd"> * initialization, or merely to check that all mandatory properties have been set.</span></div>
<div class="ln" style="top:152px">23</div>
<div class="cd" style="top:152px"><span class="jd"> *</span></div>
<div class="ln" style="top:172px">24</div>
<div class="cd" style="top:172px"><span class="jd"> * </span><span class="tg">&lt;p&gt;</span><span class="jd">An alternative to implementing InitializingBean is specifying a custom</span></div>
<div class="ln" style="top:192px">25</div>
<div class="cd" style="top:192px"><span class="jd"> * init-method, for example in an XML bean definition.</span></div>
<div class="ln" style="top:212px">26</div>
<div class="cd" style="top:212px"><span class="jd"> * For a list of all bean lifecycle methods, see the BeanFactory javadocs.</span></div>
<div class="ln" style="top:232px">27</div>
<div class="cd" style="top:232px"><span class="jd"> *</span></div>
<div class="ln" style="top:252px">28</div>
<div class="cd" style="top:252px"><span class="jd"> * </span><span class="jt">@author</span><span class="jd"> Rod Johnson</span></div>
<div class="ln" style="top:272px">29</div>
<div class="cd" style="top:272px"><span class="jd"> * </span><span class="jt">@see</span><span class="jd"> BeanNameAware</span></div>
<div class="ln" style="top:292px">30</div>
<div class="cd" style="top:292px"><span class="jd"> * </span><span class="jt">@see</span><span class="jd"> BeanFactoryAware</span></div>
<div class="ln" style="top:312px">31</div>
<div class="cd" style="top:312px"><span class="jd"> * </span><span class="jt">@see</span><span class="jd"> BeanFactory</span></div>
<div class="ln" style="top:332px">32</div>
<div class="cd" style="top:332px"><span class="jd"> * </span><span class="jt">@see</span><span class="jd"> org.springframework.beans.factory.support.RootBeanDefinition#getInitMethodName</span></div>
<div class="ln" style="top:352px">33</div>
<div class="cd" style="top:352px"><span class="jd"> * </span><span class="jt">@see</span><span class="jd"> org.springframework.context.ApplicationContextAware</span></div>
<div class="ln" style="top:372px">34</div>
<div class="cd" style="top:372px"><span class="jd"> */</span></div>
<div class="ln" style="top:392px">35</div>
<div class="cd" style="top:392px"><span class="kw">public</span><span class="df"> </span><span class="kw">interface</span><span class="df"> </span><span class="sel">InitializingBean</span><span class="df"> {</span></div>
<div class="ln" style="top:412px">36</div>
<div class="ln" style="top:432px">37</div>
<div class="cd" style="top:432px"><span class="jd">    /**</span></div>
<div class="ln" style="top:452px">38</div>
<div class="cd" style="top:452px"><span class="jd">     * Invoked by a BeanFactory after it has set all bean properties supplied</span></div>
<div class="ln" style="top:472px">39</div>
<div class="cd" style="top:472px"><span class="jd">     * (and satisfied BeanFactoryAware and ApplicationContextAware).</span></div>
<div class="ln" style="top:492px">40</div>
<div class="cd" style="top:492px"><span class="jd">     * </span><span class="tg">&lt;p&gt;</span><span class="jd">This method allows the bean instance to perform initialization only</span></div>
<div class="ln" style="top:512px">41</div>
<div class="cd" style="top:512px"><span class="jd">     * possible when all bean properties have been set and to throw an</span></div>
<div class="ln" style="top:532px">42</div>
<div class="cd" style="top:532px"><span class="jd">     * exception in the event of misconfiguration.</span></div>
<div class="ln" style="top:552px">43</div>
<div class="cd" style="top:552px"><span class="jd">     * </span><span class="jt">@throws</span><span class="jd"> Exception in the event of misconfiguration (such</span></div>
<div class="ln" style="top:572px">44</div>
<div class="cd" style="top:572px"><span class="jd">     * as failure to set an essential property) or if initialization fails.</span></div>
<div class="ln" style="top:592px">45</div>
<div class="cd" style="top:592px"><span class="jd">     */</span></div>
<div class="ln" style="top:612px">46</div>
<div class="cd" style="top:612px"><span class="df">    </span><span class="kw">void</span><span class="df"> afterPropertiesSet() </span><span class="kw">throws</span><span class="df"> Exception;</span></div>
<div class="ln" style="top:632px">47</div>
<div class="ln" style="top:652px">48</div>
<div class="cd" style="top:652px"><span class="df">}</span></div>
<div class="ln" style="top:672px">49</div>
<svg class="a" style="left:517px;top:74px" width="11" height="11" viewBox="0 0 11 11"><circle cx="5.5" cy="5.5" r="4.4" fill="#edf3fa" stroke="#9aa8bc" stroke-width="1"/><path d="M3.2 5.5H7.8" stroke="#3d4560" stroke-width="1.3"/></svg>
<svg class="a" style="left:517px;top:434px" width="11" height="11" viewBox="0 0 11 11"><circle cx="5.5" cy="5.5" r="4.4" fill="#edf3fa" stroke="#9aa8bc" stroke-width="1"/><path d="M3.2 5.5H7.8" stroke="#3d4560" stroke-width="1.3"/></svg>
<svg class="a" style="left:576px;top:150px" width="10" height="19" viewBox="0 0 10 19"><path d="M1 1.5H4M5 1.5H8M4.5 2V16M1 16.5H4M5 16.5H8" fill="none" stroke="#000" stroke-width="1"/></svg>
<div class="a" style="left:485px;top:734px;width:838px;height:1px;background:#d6d6d6"></div>
<div class="a" style="left:485px;top:734px;width:1px;height:85px;background:#d6d6d6"></div>
<div class="a" style="left:486px;top:735px;width:108px;height:29px;background:#fff"></div>
<div class="a" style="left:594px;top:735px;width:1px;height:29px;background:#d6d6d6"></div>
<div class="a" style="left:594px;top:763px;width:729px;height:1px;background:#d6d6d6"></div>
<div class="a" style="left:486px;top:764px;width:837px;height:55px;background:#fff"></div>
<div class="a" style="left:488px;top:786px;width:835px;height:1px;background:#a0a0a0"></div>
<svg class="a" style="left:491px;top:742px" width="16" height="16" viewBox="0 0 16 16"><rect x="1.7" y="1.7" width="11.6" height="9.3" rx="0.8" fill="#f2fbff" stroke="#2f62b0" stroke-width="1.5"/><path d="M4.2 5.5H8.2M4.2 7.5H10" stroke="#34479a" stroke-width="1"/><path d="M5.5 12.2H9.5" stroke="#2f62b0" stroke-width="1.8"/><path d="M2.5 13.8H12.5" stroke="#2f62b0" stroke-width="1.1"/></svg>
<div class="t" style="left:509.40px;top:737px;letter-spacing:0.317px;line-height:28px;">Console</div>
<svg class="a" style="left:575.5px;top:744.5px" width="11" height="11" viewBox="0 0 11 11"><path d="M0.5 0.5H3.1L5 2.9H6L7.9 0.5H10.5V3.1L8.1 5V6L10.5 7.9V10.5H7.9L6 8.1H5L3.1 10.5H0.5V7.9L2.9 6V5L0.5 3.1Z" fill="#fff" stroke="#555" stroke-width="1.1" stroke-linejoin="miter"/></svg>
<svg class="a" style="left:600px;top:741px" width="14" height="17" viewBox="0 0 14 17"><rect x="4.5" y="1.5" width="7.5" height="10.5" rx="2" fill="#f2cf4a" stroke="#d0a020" stroke-width="1"/><rect x="1.5" y="6.5" width="7.5" height="9.5" fill="#f6f8fc" stroke="#7a7a8a" stroke-width="1"/><path d="M3.3 9.5H7.2M3.3 11.5H7.2M3.3 13.5H7.2" stroke="#2e4f8e" stroke-width="1"/></svg>
<div class="t" style="left:617.00px;top:737px;letter-spacing:0.833px;line-height:28px;">History</div>
<svg class="a" style="left:679px;top:742px" width="18" height="17" viewBox="0 0 18 17"><g transform="rotate(45 8.5 8.5)"><rect x="5" y="0.5" width="7" height="16" rx="1.5" fill="#f7e9a8" stroke="#c8a048" stroke-width="1"/><rect x="5" y="7" width="7" height="3.5" fill="#9a9a9a"/><path d="M7.5 2.5L8.5 1.5L9.5 2.5" stroke="#5a7ab8" stroke-width="1" fill="none"/><rect x="5.5" y="11" width="6" height="5" fill="#fffbe0"/></g></svg>
<div class="t" style="left:698.40px;top:737px;letter-spacing:0.200px;line-height:28px;">Search</div>
<svg class="a" style="left:760px;top:744px" width="16" height="12" viewBox="0 0 16 12"><path d="M3 1.3H9" stroke="#1a8040" stroke-width="1.3"/><path d="M6.6 1.3V7.3Q6.6 10.4 4 10.4Q1.9 10.4 1.7 8.2" fill="none" stroke="#1a8040" stroke-width="1.8"/><path d="M8.4 4.4H11.2M12.2 4.4H15" stroke="#d83a4a" stroke-width="1.1"/><path d="M9.9 4.4V8.4Q9.9 10.6 11.9 10.6Q13.6 10.6 13.6 8.4V4.4" fill="none" stroke="#d83a4a" stroke-width="1.5"/></svg>
<div class="t" style="left:778.10px;top:737px;letter-spacing:0.225px;line-height:28px;">JUnit</div>
<div class="t" style="left:487.10px;top:765px;letter-spacing:0.491px;line-height:23px;">No consoles to display at this time.</div></body></html>
